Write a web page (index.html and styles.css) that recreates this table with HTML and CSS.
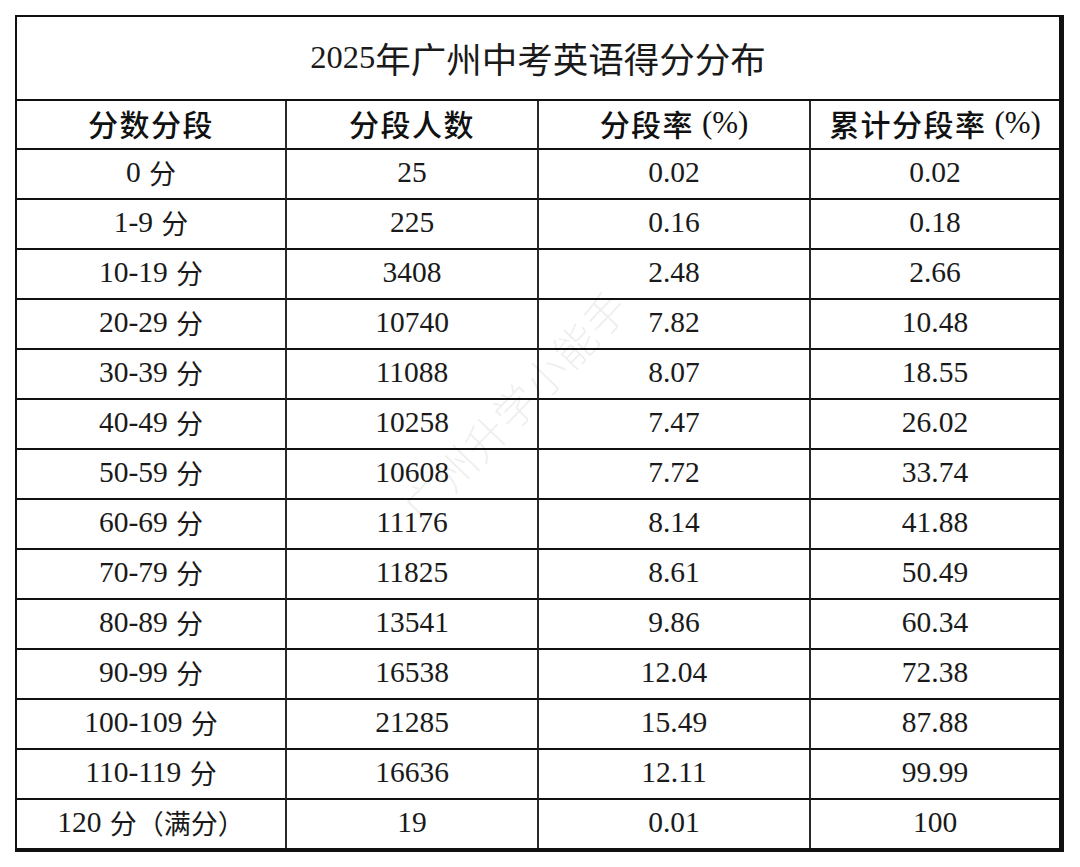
FILE: index.html
```html
<!DOCTYPE html>
<html lang="zh-CN">
<head>
<meta charset="utf-8">
<title>2025年广州中考英语得分分布</title>
<link rel="stylesheet" href="styles.css">
</head>
<body>
<div class="page">
  <div class="sheet">
    <div class="title">2025<span class="cjk">年广州中考英语得分分布</span></div>
    <div class="grid">
      <div class="cell head"><span class="hc">分数分段</span></div>
      <div class="cell head"><span class="hc">分段人数</span></div>
      <div class="cell head"><span class="hc">分段率</span> (%)</div>
      <div class="cell head last"><span class="hc">累计分段率</span> (%)</div>

      <div class="cell">0 <span class="c">分</span></div><div class="cell">25</div><div class="cell">0.02</div><div class="cell last">0.02</div>
      <div class="cell">1-9 <span class="c">分</span></div><div class="cell">225</div><div class="cell">0.16</div><div class="cell last">0.18</div>
      <div class="cell">10-19 <span class="c">分</span></div><div class="cell">3408</div><div class="cell">2.48</div><div class="cell last">2.66</div>
      <div class="cell">20-29 <span class="c">分</span></div><div class="cell">10740</div><div class="cell">7.82</div><div class="cell last">10.48</div>
      <div class="cell">30-39 <span class="c">分</span></div><div class="cell">11088</div><div class="cell">8.07</div><div class="cell last">18.55</div>
      <div class="cell">40-49 <span class="c">分</span></div><div class="cell">10258</div><div class="cell">7.47</div><div class="cell last">26.02</div>
      <div class="cell">50-59 <span class="c">分</span></div><div class="cell">10608</div><div class="cell">7.72</div><div class="cell last">33.74</div>
      <div class="cell">60-69 <span class="c">分</span></div><div class="cell">11176</div><div class="cell">8.14</div><div class="cell last">41.88</div>
      <div class="cell">70-79 <span class="c">分</span></div><div class="cell">11825</div><div class="cell">8.61</div><div class="cell last">50.49</div>
      <div class="cell">80-89 <span class="c">分</span></div><div class="cell">13541</div><div class="cell">9.86</div><div class="cell last">60.34</div>
      <div class="cell">90-99 <span class="c">分</span></div><div class="cell">16538</div><div class="cell">12.04</div><div class="cell last">72.38</div>
      <div class="cell">100-109 <span class="c">分</span></div><div class="cell">21285</div><div class="cell">15.49</div><div class="cell last">87.88</div>
      <div class="cell">110-119 <span class="c">分</span></div><div class="cell">16636</div><div class="cell">12.11</div><div class="cell last">99.99</div>
      <div class="cell end">120 <span class="c">分（满分）</span></div><div class="cell end">19</div><div class="cell end">0.01</div><div class="cell end last">100</div>
    </div>
    <div class="watermark">广州升学小能手</div>
  </div>
</div>
</body>
</html>
```

FILE: styles.css
```css
html, body {
  margin: 0;
  padding: 0;
  background: #ffffff;
}

.page {
  padding: 15px 0 0 15px;
}

.sheet {
  position: relative;
  width: 1042px;
  border-top: 2px solid #111;
  border-left: 2px solid #111;
  border-right: 5px solid #111;
  border-bottom: 4px solid #111;
  font-family: "Liberation Serif", "Noto Sans CJK SC", serif;
  color: #1a1a1a;
  overflow: hidden;
}

.title {
  height: 80px;
  padding-bottom: 2px;
  border-bottom: 2px solid #111;
  display: flex;
  align-items: center;
  justify-content: center;
  font-size: 32.5px;
}

.title .cjk {
  font-family: "Noto Sans CJK SC", sans-serif;
  font-size: 35.5px;
  font-weight: 400;
}

.grid {
  display: grid;
  grid-template-columns: 270px 252px 272px 248px;
  grid-template-rows: 49px repeat(13, 50px) 48px;
}

.cell {
  box-sizing: border-box;
  border-right: 2px solid #2a2a2a;
  border-bottom: 2px solid #111;
  display: flex;
  align-items: center;
  justify-content: center;
  font-size: 29.5px;
  padding-bottom: 3px;
  white-space: pre;
}

.cell.last {
  border-right: none;
}

.cell.end {
  border-bottom: none;
}

.cell .c {
  font-family: "Noto Sans CJK SC", sans-serif;
  font-size: 27px;
  margin-left: 1px;
}

.cell.head {
  font-size: 31px;
  color: #111;
  padding-bottom: 4px;
}

.cell.head .hc {
  font-family: "Noto Sans CJK SC", sans-serif;
  font-size: 30px;
  font-weight: 500;
  letter-spacing: 1.5px;
}

.watermark {
  position: absolute;
  left: 497px;
  top: 388px;
  transform: translate(-50%, -50%) rotate(-46deg);
  font-family: "Noto Sans CJK SC", sans-serif;
  font-weight: 300;
  font-size: 42px;
  letter-spacing: 1px;
  color: rgba(0, 0, 0, 0.08);
  white-space: nowrap;
  pointer-events: none;
}
```
